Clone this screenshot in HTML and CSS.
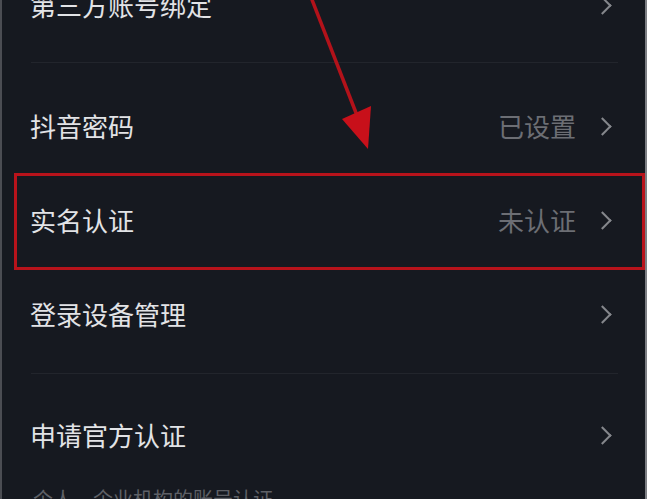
FILE: index.html
```html
<!DOCTYPE html>
<html lang="zh-CN">
<head>
    <meta charset="UTF-8">
    <meta name="viewport" content="width=device-width, initial-scale=1.0">
    <title>账号与安全</title>
    <link rel="stylesheet" href="styles.css">
</head>
<body>
    <div class="screen">
        <!-- Account section -->
        <div class="group first">
            <div class="row">
                <span class="label">第三方账号绑定</span>
                <span class="chevron"></span>
            </div>
        </div>

        <div class="divider"></div>

        <div class="group">
            <div class="row">
                <span class="label">抖音密码</span>
                <span class="value">已设置</span>
                <span class="chevron"></span>
            </div>
            <div class="row highlight">
                <span class="label">实名认证</span>
                <span class="value">未认证</span>
                <span class="chevron"></span>
            </div>
            <div class="row">
                <span class="label">登录设备管理</span>
                <span class="chevron"></span>
            </div>
        </div>

        <div class="divider second"></div>

        <div class="group">
            <div class="row">
                <span class="label">申请官方认证</span>
                <span class="chevron"></span>
            </div>
            <p class="note">个人、企业机构的账号认证</p>
        </div>

        <!-- annotation arrow -->
        <svg class="arrow" width="647" height="160" viewBox="0 0 647 160">
            <line x1="309" y1="-8" x2="358" y2="118" stroke="#b3121a" stroke-width="3.5"/>
            <polygon points="342,119 371,106 368,149" fill="#c8101a"/>
        </svg>
    </div>
</body>
</html>
```

FILE: styles.css
```css
body {
    margin: 0;
    padding: 0;
    background-color: #161920;
    font-family: "Noto Sans CJK SC", "Noto Sans", sans-serif;
    overflow: hidden;
}

.screen {
    position: relative;
    height: 499px;
    border-left: 2px solid #4b4d53;
    border-right: 2px solid #7d7f84;
    overflow: hidden;
    box-sizing: border-box;
}

.group.first {
    margin-top: -42px;
}

.row {
    display: flex;
    align-items: center;
    height: 94px;
    padding: 0 36px 0 28px;
    position: relative;
    box-sizing: border-box;
}

.label {
    flex: 1;
    font-size: 26px;
    line-height: 1;
    color: #e2e3e6;
}

.value {
    font-size: 26px;
    line-height: 1;
    color: #6c6e74;
    margin-right: 20px;
}

.chevron {
    width: 11px;
    height: 11px;
    border-top: 2px solid #85878c;
    border-right: 2px solid #85878c;
    transform: rotate(45deg);
}

.divider {
    height: 1px;
    background: #22252c;
    margin: 10px 27px 16px 29px;
}

.divider.second {
    margin: 12px 27px 14px 29px;
}

.highlight::after {
    content: "";
    position: absolute;
    left: 12px;
    right: 0;
    top: 0;
    bottom: -3px;
    border: 3px solid #b8131b;
}

.note {
    margin: 2px 0 0 31px;
    font-size: 20px;
    color: #5e6066;
}

.arrow {
    position: absolute;
    left: -2px;
    top: 0;
}
```
